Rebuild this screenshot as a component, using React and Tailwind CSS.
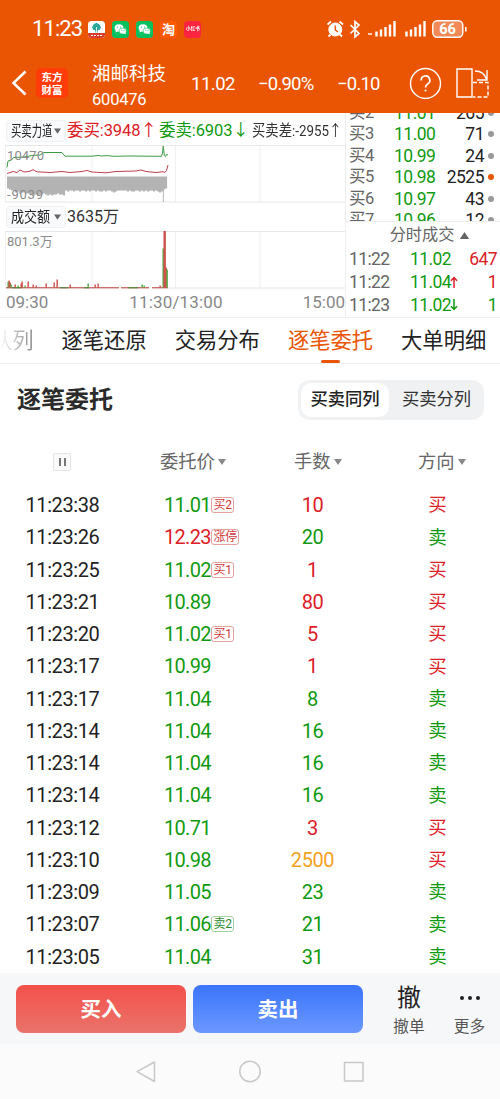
import React from "react";

const TABS = ["逐笔还原", "交易分布", "逐笔委托", "大单明细"];

const BOOK = [
    { level: "买2", price: "11.01", qty: "265" },
    { level: "买3", price: "11.00", qty: "71" },
    { level: "买4", price: "10.99", qty: "24" },
    { level: "买5", price: "10.98", qty: "2525", hot: true },
    { level: "买6", price: "10.97", qty: "43" },
    { level: "买7", price: "10.96", qty: "12" },
];

const DEALS = [
    { time: "11:22", price: "11.02", qty: "647", buy: true },
    { time: "11:22", price: "11.04", arrow: "up", qty: "1", buy: true },
    { time: "11:23", price: "11.02", arrow: "down", qty: "1", buy: false },
];

const ORDERS = [
    { time: "11:23:38", price: "11.01", tag: "买2", qty: "10", side: "买" },
    { time: "11:23:26", price: "12.23", tag: "涨停", qty: "20", side: "卖", up: true },
    { time: "11:23:25", price: "11.02", tag: "买1", qty: "1", side: "买" },
    { time: "11:23:21", price: "10.89", qty: "80", side: "买" },
    { time: "11:23:20", price: "11.02", tag: "买1", qty: "5", side: "买" },
    { time: "11:23:17", price: "10.99", qty: "1", side: "买" },
    { time: "11:23:17", price: "11.04", qty: "8", side: "卖" },
    { time: "11:23:14", price: "11.04", qty: "16", side: "卖" },
    { time: "11:23:14", price: "11.04", qty: "16", side: "卖" },
    { time: "11:23:14", price: "11.04", qty: "16", side: "卖" },
    { time: "11:23:12", price: "10.71", qty: "3", side: "买" },
    { time: "11:23:10", price: "10.98", qty: "2500", side: "买", big: true },
    { time: "11:23:09", price: "11.05", qty: "23", side: "卖" },
    { time: "11:23:07", price: "11.06", tag: "卖2", qty: "21", side: "卖" },
    { time: "11:23:05", price: "11.04", qty: "31", side: "卖" },
];

const DEPTH = [12, 13, 14, 14, 16, 15, 17, 16, 16, 17, 17, 18, 18, 19, 18, 19, 18, 18, 17, 18, 19, 18, 19, 18, 18, 17, 18, 18, 19, 14, 15, 14, 14, 15, 14, 14, 15, 14, 14, 15, 14, 15, 14, 14, 15, 14, 15, 15, 14, 15, 14, 14, 15, 16, 15, 14, 14, 14, 14, 14, 15, 14, 15, 15, 14, 14, 15, 14, 15, 14, 15, 14, 14, 15, 14, 15, 16, 15, 13, 12];

const VOLUME = [
    [8, 6, "g"], [9, 7, "r"], [10, 5, "r"], [11, 3, "g"], [15, 3, "r"], [18, 2, "g"], [21, 4, "r"], [22, 6, "r"],
    [25, 2, "g"], [28, 6, "r"], [33, 3, "r"], [36, 2, "r"], [46, 4, "r"], [54, 5, "r"], [57, 8, "r"],
    [70, 3, "r"], [88, 4, "g"], [95, 3, "r"], [98, 4, "r"], [142, 3, "g"], [144, 2, "g"], [160, 2, "r"],
    [163, 39, "g"], [164, 57, "r"], [165, 57, "r"], [166, 20, "r"], [167, 18, "g"],
];

const Caret = ({ className }) => (
    <svg viewBox="0 0 8 6" className={className} fill="currentColor">
        <path d="M0 0h8L4 6z" />
    </svg>
);

const WeChat = () => (
    <svg viewBox="0 0 17 17" className="h-[17px] w-[17px]">
        <rect width="17" height="17" rx="3.5" fill="#07c160" />
        <ellipse cx="7" cy="7" rx="4.4" ry="3.7" fill="#fff" />
        <path d="M4 9.5l-.6 2 2.3-1.1z" fill="#fff" />
        <ellipse cx="10.8" cy="10" rx="3.7" ry="3.1" fill="#fff" stroke="#07c160" strokeWidth=".6" />
        <path d="M12.3 12.4l1.6 1-.3-1.9z" fill="#fff" />
        <g fill="#07c160">
            <circle cx="5.5" cy="6" r=".6" />
            <circle cx="8.4" cy="6" r=".6" />
            <circle cx="9.7" cy="9.2" r=".5" />
            <circle cx="12" cy="9.2" r=".5" />
        </g>
    </svg>
);

const StatusBar = () => (
    <div className="flex h-[56px] items-center pt-[2px] pl-[32px]">
        <span className="w-[56px] text-[22px] leading-none tracking-[-0.9px]">11:23</span>
        <div className="flex items-center gap-[7px]">
            <svg viewBox="0 0 17 17" className="h-[17px] w-[17px]">
                <rect width="17" height="17" rx="3.5" fill="#fff" />
                <path d="M0 12h17v1.5a3.5 3.5 0 0 1-3.5 3.5h-10A3.5 3.5 0 0 1 0 13.5z" fill="#d6402a" />
                <path d="M8.5 1.800l3 1.700 1.500 3-1.500 2.500H10L9.200 12H7.800L7 9H5.500L4 6.500l1.500-3z" fill="#2ba79b" />
                <path d="M8.500 6v6" stroke="#fff" strokeWidth=".8" />
                <path d="M3 14.500h11" stroke="#fff" strokeWidth="1.200" strokeDasharray="2 1" />
            </svg>
            <WeChat />
            <WeChat />
            <span className="flex h-[17px] w-[17px] items-center justify-center rounded-[4px] bg-[#ff5a00] text-[13px] leading-none font-bold">淘</span>
            <span className="flex h-[17px] w-[17px] items-center justify-center rounded-[4px] bg-[#fa2441]">
                <span className="shrink-0 scale-[0.46] text-[10px] leading-none font-bold whitespace-nowrap">小红书</span>
            </span>
        </div>
        <svg viewBox="326 18 142 22" className="ml-auto mr-[32px] h-[22px] w-[142px]" fill="none" stroke="#fff">
            <circle cx="335.300" cy="29.500" r="6.500" fill="#fff" />
            <path d="M327.500 24.500l3.500-3M343 24.500l-3.500-3M330.500 34.500l-2 2M340 34.500l2 2" strokeWidth="1.800" />
            <path d="M335.300 25.500v4.300l2.700 2.200" stroke="#ea5504" strokeWidth="1.400" />
            <path d="M350.500 25l8.500 8.500-4 3.500V21.500l4 3.500-8.500 8.500" strokeWidth="1.700" />
            <path d="M368 34h4" strokeWidth="2" opacity=".7" />
            <path d="M376.500 36.500v-5M381 36.500v-7M385.500 36.500v-9.500M390 36.500v-12M394.500 36.500v-15.500" strokeWidth="2.400" />
            <path d="M406.500 36.500v-5M411 36.500v-7M415.500 36.500v-9.500M420 36.500v-12M424.500 36.500v-15.500" strokeWidth="2.400" />
            <rect x="432.800" y="20.800" width="30" height="16.400" rx="4.500" fill="#f28a58" strokeWidth="1.400" />
            <path d="M465.800 27v4.500" strokeWidth="1.600" />
            <text x="447.500" y="34.300" textAnchor="middle" fontSize="14.500" fontWeight="700" fill="#fff" stroke="none">66</text>
        </svg>
    </div>
);

const StockBar = () => (
    <div className="flex h-[57px] pl-[11px]">
        <svg viewBox="0 0 16 26" className="mt-[14px] h-[26px] w-[16px]" fill="none" stroke="#fff" strokeWidth="2.500">
            <path d="M14.500 1.500L2.500 13l12 11.500" />
        </svg>
        <div className="mt-[12px] ml-[9px] flex h-[30px] w-[32px] flex-col items-center justify-center rounded-[5px] bg-[#ff3c0a] font-['Noto_Sans_CJK_SC',sans-serif] text-[10.500px] leading-[13px] font-bold">
            <span>东方</span>
            <span>财富</span>
        </div>
        <div className="ml-[24px] w-[99px]">
            <div className="mt-[5px] text-[18.500px] leading-[26px]">湘邮科技</div>
            <div className="text-[16.500px] leading-[26px] tracking-[-0.2px]">600476</div>
        </div>
        <span className="mt-[14px] w-[67px] text-[18.500px] leading-[28px] tracking-[-0.5px]">11.02</span>
        <span className="mt-[14px] w-[79px] text-[18.500px] leading-[28px] tracking-[-0.800px]">−0.90%</span>
        <span className="mt-[14px] w-[72px] text-[18.500px] leading-[28px] tracking-[-0.800px]">−0.10</span>
        <svg viewBox="409 67 82 32" className="mt-[11px] h-[32px] w-[82px]" fill="none" stroke="#fff" strokeWidth="1.400">
            <circle cx="425.500" cy="83.500" r="15" />
            <path d="M421.200 80.500a4.300 4.300 0 1 1 6.500 3.400c-1.600 1-2.200 1.700-2.200 3.600" strokeWidth="1.700" />
            <circle cx="425.500" cy="90.500" r="1.100" fill="#fff" stroke="none" />
            <path d="M457 69h15v28h-15z" />
            <path d="M473 82.500h15v14.500h-15" strokeDasharray="4 2" />
            <path d="M475 71c6 0 10 3 11.500 8.500M487 70v10h-10" />
        </svg>
    </div>
);

const ForceChart = () => (
    <svg viewBox="0 145 345 57.500" className="block h-[57.500px] w-[345px]" fill="none">
        <path d="M5.500 145v57M92 145v57M175.500 145v57M260 145v57" stroke="#f0f0f0" />
        <path d="M5 145.500h340M5 202h340" stroke="#e6e6e6" />
        {DEPTH.map((h, i) => (
            <rect key={i} x={7 + i * 2} y="176.500" width="2.100" height={h} fill="#b3b3b3" />
        ))}
        <path d="M163.300 177v25" stroke="#b3b3b3" />
        <path d="M7 167.500L8 161 11.500 160 13.500 157.500 24 157 32 155.500 40 155 44 152.500H62L65 156.200H92L98 155.500 102 156 107 155.600 114 156.300 128 156 161.500 156.300 162.500 153 163.300 146 164.300 155.500 165.500 156.500 166.300 154.500 168 155" stroke="#3c9a45" strokeWidth="1" />
        <path d="M7 173.500L13 171.500 17 172.500 20 170 24 172 29 171.500 33 169.700 37 171.800 50 172.500 62 171.500 70 172.500 82 171.500 87 170.500 92 172 106 172.800 116 171.500 136 171 141 170 146 171.500 156 172.500 163 171.700 165 172.500 166.500 170.500 168 165" stroke="#c0404f" strokeWidth="1" />
        <g fill="#8a8a8a" fontSize="13">
            <text x="7" y="160" textLength="37">10470</text>
            <text x="7" y="199" textLength="36">-9039</text>
        </g>
    </svg>
);

const VolumeChart = () => (
    <svg viewBox="0 230.500 345 58" className="block h-[58px] w-[345px]" fill="none">
        <path d="M5.500 231v57M92 231v57M175.500 231v57M260 231v57" stroke="#f0f0f0" />
        <path d="M5 231h340M168 287.500h177" stroke="#e6e6e6" />
        <text x="7" y="245.500" fontSize="13" fill="#8a8a8a">801.3万</text>
        <path d="M6 287.300h113M121 287.300h28M152 287.300h16" stroke="#b5352d" />
        <path d="M12 287.300h9M60 287.300h8M84 287.300h5M128 287.300h10" stroke="#3a8f35" />
        {VOLUME.map(([x, h, c], i) => (
            <rect key={i} x={x - 0.5} y={287 - h} width="1.300" height={h} fill={c === "r" ? "#c8413b" : "#3fa535"} />
        ))}
    </svg>
);

const Quote = () => (
    <section className="flex h-[204px] bg-white">
        <div className="w-[345px] shrink-0">
            <div className="flex h-[32px] items-center pt-[4px] pl-[6px] leading-none whitespace-nowrap">
                <div className="flex h-[22px] w-[60px] shrink-0 items-center rounded-sm border border-[#f0f1f4] bg-[#f9fafb] pl-[4px] text-[#222]">
                    <span className="w-[43px] shrink-0">
                        <span className="inline-block origin-left scale-x-[0.69] text-[15px]">买卖力道</span>
                    </span>
                    <Caret className="h-[6px] w-[7px] shrink-0 text-[#666]" />
                </div>
                <span className="ml-[1px] w-[92px] shrink-0 text-[16.500px] tracking-[-0.1px] text-[#dc2027]">委买:3948↑</span>
                <span className="w-[93px] shrink-0 text-[16.500px] tracking-[-0.1px] text-[#119a11]">委卖:6903↓</span>
                <span className="w-[90px] shrink-0">
                    <span className="inline-block origin-left scale-x-[0.86] text-[15.500px] text-[#333]">买卖差:-2955↑</span>
                </span>
            </div>
            <ForceChart />
            <div className="flex h-[28px] items-center pl-[6px] leading-none whitespace-nowrap">
                <div className="flex h-[22px] w-[60px] items-center rounded-sm border border-[#f0f1f4] bg-[#f9fafb] pl-[4px] text-[#222]">
                    <span className="w-[43px] shrink-0">
                        <span className="inline-block origin-left scale-x-[0.87] text-[15px]">成交额</span>
                    </span>
                    <Caret className="h-[6px] w-[7px] shrink-0 text-[#666]" />
                </div>
                <span className="ml-[1px] text-[16px] text-[#333]">3635万</span>
            </div>
            <VolumeChart />
            <div className="flex h-[28px] items-center justify-between pl-[6px] text-[17px] text-[#888]">
                <span>09:30</span>
                <span className="pl-[1px] tracking-[0.15px]">11:30/13:00</span>
                <span>15:00</span>
            </div>
        </div>

        <div className="min-w-0 flex-1 border-l border-[#eee]">
            <div className="h-[109px] overflow-hidden border-b border-[#eee]">
                <div className="-mt-[11px]">
                    {BOOK.map((row) => (
                        <div key={row.level} className="flex h-[21.500px] items-center pl-[3px] text-[17.500px] tracking-[-0.5px]">
                            <span className="w-[45px] pt-[1px] text-[16.500px] text-[#666]">{row.level}</span>
                            <span className="w-[44px] text-[#119a11]">{row.price}</span>
                            <span className="flex-1 text-right text-[#222]">{row.qty}</span>
                            <span className={`mr-[6px] ml-[4px] h-[6px] w-[6px] rounded-full ${row.hot ? "bg-[#ea5504]" : "bg-[#999]"}`} />
                        </div>
                    ))}
                </div>
            </div>
            <div className="flex h-[26px] items-center justify-center gap-[5px] pl-[14px] text-[16.200px] text-[#666]">
                分时成交
                <Caret className="h-[7px] w-[11px] rotate-180" />
            </div>
            {DEALS.map((row, i) => (
                <div key={i} className="flex h-[22.700px] items-center pr-[3px] pl-[3px] text-[17.500px] tracking-[-0.6px]">
                    <span className="w-[61px] text-[#666]">{row.time}</span>
                    <span className="w-[40px] text-[#119a11]">{row.price}</span>
                    {row.arrow && (
                        <svg viewBox="0 0 8 12" className={`h-[12px] w-[8px] ${row.arrow === "up" ? "text-[#dc2027]" : "rotate-180 text-[#119a11]"}`} fill="none" stroke="currentColor" strokeWidth="1.500">
                            <path d="M4 12V1.500M1 4.800l3-3.300 3 3.300" />
                        </svg>
                    )}
                    <span className={`flex-1 text-right ${row.buy ? "text-[#dc2027]" : "text-[#119a11]"}`}>{row.qty}</span>
                </div>
            ))}
        </div>
    </section>
);

const TabBar = () => (
    <nav className="flex h-[47px] overflow-hidden border-y border-[#f0f0f0] bg-white text-[21.300px] leading-[45px] whitespace-nowrap text-[#222]">
        <div className="flex w-[33.500px] shrink-0 justify-end bg-gradient-to-r from-white to-[#888] bg-clip-text text-transparent">队列</div>
        {TABS.map((tab) => {
            const isActive = tab === "逐笔委托";
            return (
                <div key={tab} className={`relative ml-[28px] w-[85.200px] shrink-0 ${isActive ? "text-[#ea5504]" : ""}`}>
                    {tab}
                    {isActive && <span className="absolute bottom-0 left-[33px] h-[3px] w-[19px] rounded-full bg-[#ea5504]" />}
                </div>
            );
        })}
    </nav>
);

const OrderList = () => (
    <section className="h-[609px] overflow-hidden bg-white">
        <div className="flex h-[71px] items-center justify-between pr-[16px] pl-[17px]">
            <h1 className="text-[24px] font-bold text-[#2b2b2b]">逐笔委托</h1>
            <div className="flex h-[40px] w-[186px] items-center rounded-[12px] bg-[#f0f1f3] p-[3px] text-[17.300px] text-[#333]">
                <span className="flex h-[34px] w-[88px] items-center justify-center rounded-[10px] bg-white font-medium text-[#222]">买卖同列</span>
                <span className="flex flex-1 items-center justify-center pl-[3px]">买卖分列</span>
            </div>
        </div>

        <div className="flex h-[54px] items-center text-[18.300px] text-[#666]">
            <div className="w-[160px] pl-[53px]">
                <div className="flex h-[18px] w-[18px] items-center justify-center gap-[3px] rounded-[2px] border border-[#e5e5e5] bg-[#fafafa]">
                    <span className="h-[8px] w-[2px] bg-[#777]" />
                    <span className="h-[8px] w-[2px] bg-[#777]" />
                </div>
            </div>
            <div className="flex w-[134px] items-center gap-[3px]">委托价<Caret className="h-[6px] w-[8px] text-[#888]" /></div>
            <div className="flex w-[124px] items-center gap-[3px]">手数<Caret className="h-[6px] w-[8px] text-[#888]" /></div>
            <div className="flex items-center gap-[3px]">方向<Caret className="h-[6px] w-[8px] text-[#888]" /></div>
        </div>

        {ORDERS.map((row, i) => {
            const sideColor = row.side === "买" ? "text-[#dc2027]" : "text-[#119a11]";
            return (
                <div key={i} className="flex h-[32.250px] items-center pl-[25.500px] text-[20px]">
                    <span className="w-[138.500px] tracking-[-0.4px] text-[#222]">{row.time}</span>
                    <span className={`w-[47px] tracking-[-0.7px] ${row.up ? "text-[#dc2027]" : "text-[#119a11]"}`}>{row.price}</span>
                    <span className="w-[56px]">
                        {row.tag && (
                            <span className={`flex h-[16px] w-fit items-center rounded-[3px] border px-[1.500px] text-[12px] leading-none tracking-[-0.3px] ${row.tag[0] === "卖" ? "border-[#a3cfa3] text-[#2c8a2c]" : "border-[#e5a0a0] text-[#cf3a3a]"}`}>{row.tag}</span>
                        )}
                    </span>
                    <span className={`w-[91px] text-center tracking-[-0.4px] ${row.big ? "text-[#f5a11c]" : sideColor}`}>{row.qty}</span>
                    <span className={`flex-1 pt-[2px] pl-[17px] text-center text-[18.500px] ${sideColor}`}>{row.side}</span>
                </div>
            );
        })}
    </section>
);

const BottomBar = () => (
    <footer>
        <div className="flex h-[71px] bg-[#f6f7f9] pt-[12px] pl-[16px]">
            <button className="h-[48px] w-[170px] rounded-[8px] bg-gradient-to-b from-[#f4504b] to-[#e9726a] pt-[2px] text-[20.500px] font-bold text-white">买入</button>
            <button className="ml-[7px] h-[48px] w-[170px] rounded-[8px] bg-gradient-to-b from-[#3b74fb] to-[#6b98ff] pt-[2px] text-[20.500px] font-bold text-white">卖出</button>
            <div className="ml-[16px] flex w-[60px] flex-col items-center text-[#222]">
                <span className="mt-[1px] text-[24px] leading-[24px]">撤</span>
                <span className="mt-[5px] text-[15.700px] leading-[24px] text-[#555]">撤单</span>
            </div>
            <div className="flex w-[61px] flex-col items-center text-[#222]">
                <span className="mt-[1px] flex h-[24px] items-center gap-[4px]">
                    <span className="h-[4px] w-[4px] rounded-full bg-[#222]" />
                    <span className="h-[4px] w-[4px] rounded-full bg-[#222]" />
                    <span className="h-[4px] w-[4px] rounded-full bg-[#222]" />
                </span>
                <span className="mt-[5px] text-[15.700px] leading-[24px] text-[#555]">更多</span>
            </div>
        </div>
        <div className="flex h-[55px] items-center justify-center bg-[#fbfbfb]">
            <svg viewBox="0 0 230 24" className="h-[24px] w-[230px]" fill="none" stroke="#c8c8c8" strokeWidth="1.500" strokeLinejoin="round">
                <path d="M19.500 2v19.500L2 11.700z" />
                <circle cx="115" cy="11.500" r="10.200" />
                <rect x="209.500" y="2.500" width="18.500" height="18.500" />
            </svg>
        </div>
    </footer>
);

const App = () => (
    <div className="h-[1099px] w-[500px] overflow-hidden bg-white font-['Roboto','Noto_Sans_CJK_SC',sans-serif]">
        <header className="h-[113px] bg-[#ea5504] text-white">
            <StatusBar />
            <StockBar />
        </header>
        <Quote />
        <TabBar />
        <OrderList />
        <BottomBar />
    </div>
);

export default App;
